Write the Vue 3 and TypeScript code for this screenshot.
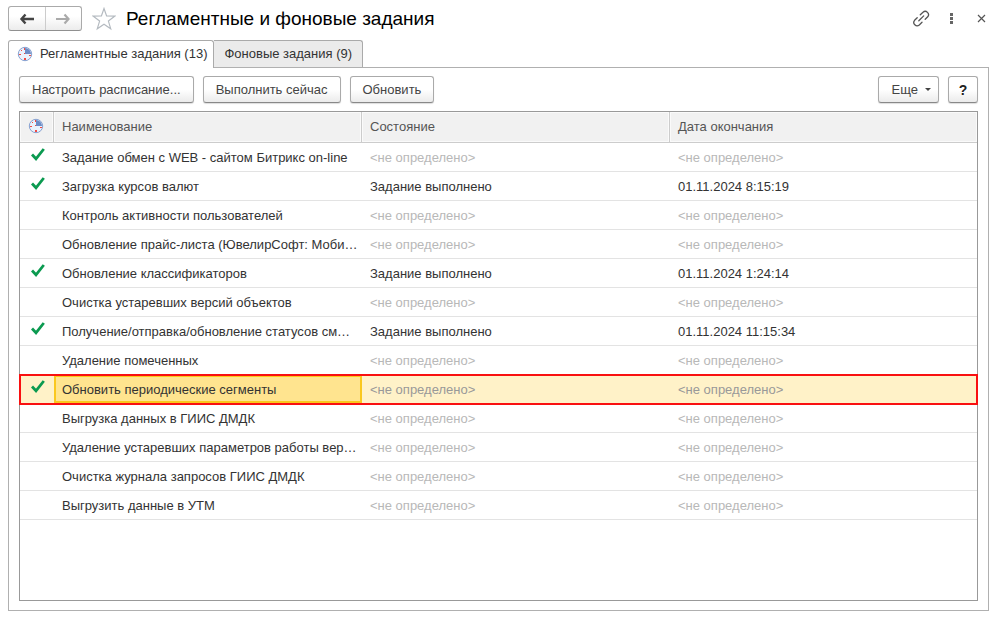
<script setup lang="ts">
import { ref } from 'vue'

interface Job {
  name: string
  done?: boolean
  state?: string
  finished?: string
}

const EMPTY = '<не определено>'

const jobs: Job[] = [
  { name: 'Задание обмен с WEB - сайтом Битрикс on-line', done: true },
  { name: 'Загрузка курсов валют', done: true, state: 'Задание выполнено', finished: '01.11.2024 8:15:19' },
  { name: 'Контроль активности пользователей' },
  { name: 'Обновление прайс-листа (ЮвелирСофт: Моби…' },
  { name: 'Обновление классификаторов', done: true, state: 'Задание выполнено', finished: '01.11.2024 1:24:14' },
  { name: 'Очистка устаревших версий объектов' },
  { name: 'Получение/отправка/обновление статусов см…', done: true, state: 'Задание выполнено', finished: '01.11.2024 11:15:34' },
  { name: 'Удаление помеченных' },
  { name: 'Обновить периодические сегменты', done: true },
  { name: 'Выгрузка данных в ГИИС ДМДК' },
  { name: 'Удаление устаревших параметров работы вер…' },
  { name: 'Очистка журнала запросов ГИИС ДМДК' },
  { name: 'Выгрузить данные в УТМ' },
]

const selected = ref(8)
</script>

<template>
  <main class="window">
    <header class="titlebar">
      <div class="history">
        <button type="button" aria-label="Назад">
          <svg width="16" height="12" viewBox="0 0 16 12"><path d="M6.5 1.5 2.5 6l4 4.5M3 6h12" fill="none" stroke="#444" stroke-width="2.4" /></svg>
        </button>
        <button type="button" aria-label="Вперед">
          <svg width="16" height="12" viewBox="0 0 16 12"><path d="M9.5 1.5 13.5 6l-4 4.5M13 6H1" fill="none" stroke="#aaa" stroke-width="2.2" /></svg>
        </button>
      </div>
      <button type="button" class="plain star" aria-label="В избранное">
        <svg width="24" height="24" viewBox="0 0 24 24"><path d="m12 1.5 2.6 7.400 8.400.2-6.600 5 2.300 7.600-6.700-4.500-6.700 4.500 2.300-7.600-6.600-5 8.400-.2z" fill="#fff" stroke="#b4bac0" stroke-width="1.2" /></svg>
      </button>
      <h1>Регламентные и фоновые задания</h1>
      <div class="tools">
        <button type="button" class="plain" aria-label="Получить ссылку">
          <svg width="18" height="18" viewBox="0 0 18 18" fill="none" stroke="#555" stroke-width="1.3" stroke-linecap="round">
            <path d="M8.3 4.7 11 2.2a3.3 3.3 0 0 1 4.7 4.6L13.2 9.3" />
            <path d="M5.2 7.7 2.6 10.3a3.3 3.3 0 0 0 4.7 4.6L10 12.3" />
            <path d="m6.8 10.8 4.9-4.9" />
          </svg>
        </button>
        <button type="button" class="plain" aria-label="Меню">
          <svg width="18" height="18" viewBox="0 0 18 18" fill="#666"><path d="M8 3h3v3H8zM8 7h3v3H8zM8 11h3v3H8z" /></svg>
        </button>
        <button type="button" class="plain" aria-label="Закрыть">
          <svg width="18" height="18" viewBox="0 0 18 18"><path d="m6 5 7 7m0-7-7 7" stroke="#555" stroke-width="1.2" /></svg>
        </button>
      </div>
    </header>

    <nav class="tabs" role="tablist">
      <button type="button" role="tab" aria-selected="true" class="tab active">
        <svg width="16" height="16" viewBox="0 0 16 16">
          <circle cx="8" cy="8" r="6.7" fill="#eaf2fc" stroke="#86a0d0" />
          <path d="M8 8V2a6 6 0 0 1 6 6z" fill="#6c8cc6" />
          <path d="M7 2h1v2H7zM7 12h2v2H7zM2 8h2v1H2zM12 9h2v1h-2zM4 4h1v1H4zM7 7h1v1H7z" fill="#f04a44" />
        </svg>
        Регламентные задания (13)
      </button>
      <button type="button" role="tab" aria-selected="false" class="tab">Фоновые задания (9)</button>
    </nav>

    <section class="panel">
      <div class="commands">
        <button type="button" class="btn">Настроить расписание...</button>
        <button type="button" class="btn">Выполнить сейчас</button>
        <button type="button" class="btn">Обновить</button>
        <button type="button" class="btn more">Еще <span class="caret"></span></button>
        <button type="button" class="btn help">?</button>
      </div>

      <div class="list">
        <table>
          <colgroup>
            <col class="c-mark" />
            <col class="c-text" />
            <col class="c-text" />
            <col />
          </colgroup>
          <thead>
            <tr>
              <th class="mark" aria-label="Выполнено">
                <svg width="16" height="16" viewBox="0 0 16 16">
                  <circle cx="8" cy="8" r="6.7" fill="#eaf2fc" stroke="#86a0d0" />
                  <path d="M8 8V2a6 6 0 0 1 6 6z" fill="#6c8cc6" />
                  <path d="M7 2h1v2H7zM7 12h2v2H7zM2 8h2v1H2zM12 9h2v1h-2zM4 4h1v1H4zM7 7h1v1H7z" fill="#f04a44" />
                </svg>
              </th>
              <th>Наименование</th>
              <th>Состояние</th>
              <th>Дата окончания</th>
            </tr>
          </thead>
          <tbody>
            <tr v-for="(job, i) in jobs" :key="job.name" :class="{ selected: i === selected }" @click="selected = i">
              <td class="mark">
                <svg v-if="job.done" width="14" height="14" viewBox="0 0 14 14"><path d="m1 7.5 4 4.3L12.8 2" fill="none" stroke="#0b9a50" stroke-width="2.8" /></svg>
              </td>
              <td class="name">{{ job.name }}</td>
              <td :class="{ empty: !job.state }">{{ job.state ?? EMPTY }}</td>
              <td :class="{ empty: !job.finished }">{{ job.finished ?? EMPTY }}</td>
            </tr>
          </tbody>
        </table>
      </div>
    </section>
  </main>
</template>

<style>
body {
  margin: 0;
  background: #fff;
}
</style>

<style scoped>
.window {
  box-sizing: border-box;
  min-height: 100vh;
  padding: 6px 15px 7px 8px;
  display: flex;
  flex-direction: column;
  font: 13px/16px "Liberation Sans", Arial, sans-serif;
  color: #333;
}
button {
  font: inherit;
  color: inherit;
  margin: 0;
}
svg {
  display: block;
}
.titlebar {
  display: flex;
  align-items: center;
  height: 25px;
}
.history {
  display: flex;
  box-sizing: border-box;
  width: 74px;
  height: 25px;
  border: 1px solid #aaa;
  border-bottom-color: #909090;
  border-radius: 3px;
  background: linear-gradient(#fff 40%, #ececec);
}
.history button {
  flex: 1;
  display: flex;
  align-items: center;
  justify-content: center;
  padding: 0;
  border: 0;
  background: none;
}
.history button + button {
  border-left: 1px solid #ccc;
}
.plain {
  padding: 0;
  border: 0;
  background: none;
}
.star {
  margin: 0 10px;
}
h1 {
  margin: 0;
  font-size: 19px;
  line-height: 24px;
  font-weight: 400;
  color: #000;
}
.tools {
  display: flex;
  gap: 12px;
  margin-left: auto;
  margin-right: -1px;
}
.tabs {
  display: flex;
  margin-top: 9px;
  height: 27px;
}
.tab {
  display: flex;
  align-items: center;
  gap: 7px;
  padding: 0 10px;
  border: 1px solid #aaa;
  border-bottom: 0;
  border-left: 0;
  border-radius: 0 3px 0 0;
  background: #ebebeb;
}
.tab.active {
  padding: 0 6px 2px 8px;
  border-left: 1px solid #aaa;
  border-radius: 3px 3px 0 0;
  background: #fff;
  margin-bottom: -1px;
  z-index: 1;
}
.panel {
  flex: 1;
  display: flex;
  flex-direction: column;
  padding: 8px 10px 9px;
  border: 1px solid #b0b0b0;
}
.commands {
  display: flex;
  gap: 9px;
  margin-bottom: 8px;
}
.btn {
  height: 27px;
  padding: 0 12px;
  border: 1px solid #aaa;
  border-bottom-color: #888;
  border-radius: 3px;
  background: linear-gradient(#fff 50%, #ebebeb);
  box-shadow: 0 1px 1px #ddd;
  color: #444;
}
.more {
  display: flex;
  align-items: center;
  gap: 7px;
  margin-left: auto;
  padding: 0 7px 0 13px;
}
.caret {
  border: 3px solid transparent;
  border-top-color: #444;
  border-bottom: 0;
}
.help {
  width: 30px;
  padding: 0;
  font-size: 14px;
  font-weight: 700;
  color: #222;
}
.list {
  flex: 1;
  border: 1px solid #999;
}
table {
  width: 100%;
  table-layout: fixed;
  border-collapse: separate;
  border-spacing: 0;
}
.c-mark {
  width: 34px;
}
.c-text {
  width: 308px;
}
th,
td {
  box-sizing: border-box;
  height: 29px;
  padding: 0 0 0 8px;
  border-bottom: 1px solid #e3e3e3;
  text-align: left;
  font-weight: 400;
  white-space: nowrap;
  overflow: hidden;
  text-overflow: ellipsis;
}
td {
  padding-top: 2px;
}
th {
  height: 31px;
  border-right: 1px solid #ccc;
  border-bottom-color: #ccc;
  background: #f1f1f1;
  box-shadow: inset 0 0 0 1px #fafafa;
  color: #555;
}
th:last-child {
  border-right: 0;
}
th.mark {
  padding-bottom: 2px;
}
td.mark {
  padding: 0 0 6px 11px;
}
.empty {
  color: #b8b8b8;
}
.selected {
  outline: 2px solid #f91010;
  outline-offset: -1px;
}
.selected td {
  background: #fff2c8;
  border-bottom-color: #fff2c8;
}
.selected .empty {
  color: #999;
}
.selected .name {
  background: #ffe48f;
  border-bottom-color: #ffe48f;
  box-shadow: inset 0 0 0 2px #fac81e;
}
</style>
